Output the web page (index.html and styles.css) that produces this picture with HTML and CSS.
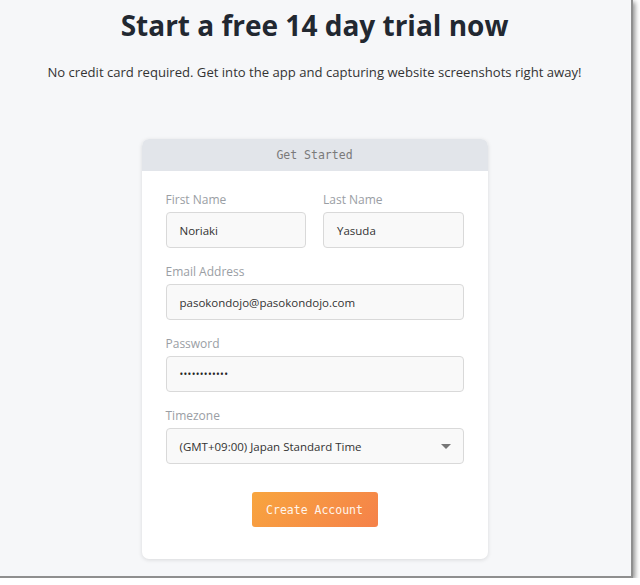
FILE: index.html
```html
<!DOCTYPE html>
<html>
<head>
<meta charset="utf-8">
<link rel="stylesheet" href="styles.css">
</head>
<body>
<div class="frame">
  <h1 class="title">Start a free 14 day trial now</h1>
  <p class="subtitle">No credit card required. Get into the app and capturing website screenshots right away!</p>
  <div class="card">
    <div class="card-header">Get Started</div>
    <form class="card-body">
      <div class="row">
        <div class="field">
          <label class="label">First Name</label>
          <div class="input">Noriaki</div>
        </div>
        <div class="field">
          <label class="label">Last Name</label>
          <div class="input">Yasuda</div>
        </div>
      </div>
      <div class="field">
        <label class="label">Email Address</label>
        <div class="input">pasokondojo@pasokondojo.com</div>
      </div>
      <div class="field">
        <label class="label">Password</label>
        <div class="input password">••••••••••••</div>
      </div>
      <div class="field">
        <label class="label">Timezone</label>
        <div class="input select">
          <span>(GMT+09:00) Japan Standard Time</span>
          <svg class="caret" width="10" height="5" viewBox="0 0 10 5"><path d="M0 0h10L5 5z" fill="#777"/></svg>
        </div>
      </div>
      <div class="actions">
        <button type="button" class="btn">Create Account</button>
      </div>
    </form>
  </div>
</div>
</body>
</html>
```

FILE: styles.css
```css
* { box-sizing: border-box; }
html, body { margin: 0; padding: 0; background: #ffffff; }
body { font-family: "Open Sans", "Noto Sans", sans-serif; color: #333; }
.frame {
  width: 633px;
  height: 578px;
  background: #f6f7f9;
  border-right: 2px solid #8f8f8f;
  border-bottom: 2px solid #8f8f8f;
  box-shadow: 2px 2px 5px rgba(0,0,0,0.45);
  display: flex;
  flex-direction: column;
  align-items: center;
  padding-top: 6px;
  padding-right: 2px;
}
.title {
  margin: 0;
  font-size: 28px;
  font-weight: 700;
  color: #222831;
  line-height: 38px;
}
.subtitle {
  margin: 17px 0 0;
  font-size: 13.1px;
  color: #333;
  line-height: 22px;
}
.card {
  margin-top: 56px;
  width: 346px;
  background: #fff;
  border-radius: 7px;
  box-shadow: 0 1px 4px rgba(0,0,0,0.12);
  overflow: hidden;
}
.card-header {
  height: 32px;
  background: #e2e5ea;
  text-align: center;
  font-family: "DejaVu Sans Mono", monospace;
  font-size: 11.5px;
  color: #7a7a7a;
  line-height: 32px;
}
.card-body {
  padding: 20px 24px 32px 24px;
  display: flex;
  flex-direction: column;
  gap: 15px;
}
.row { display: flex; gap: 17px; }
.row .field { flex: 1; }
.field { display: flex; flex-direction: column; gap: 3px; }
.label {
  font-size: 12px;
  line-height: 18px;
  color: #9a9ea4;
}
.input {
  height: 36px;
  border: 1px solid #d9d9d9;
  border-radius: 4px;
  background: #f9f9f9;
  font-size: 11.5px;
  color: #333;
  padding: 0 13px;
  display: flex;
  align-items: center;
}
.password { font-size: 10px; letter-spacing: 0.3px; color: #222; }
.select { justify-content: space-between; padding-right: 12px; }
.caret { display: block; }
.actions { display: flex; justify-content: center; margin-top: 13px; }
.btn {
  width: 126px;
  height: 35px;
  border: none;
  border-radius: 3px;
  background: linear-gradient(135deg, #f8a53e, #f5814a);
  color: #fff5ec;
  font-family: "DejaVu Sans Mono", monospace;
  font-size: 11.5px;
  cursor: pointer;
}
```
